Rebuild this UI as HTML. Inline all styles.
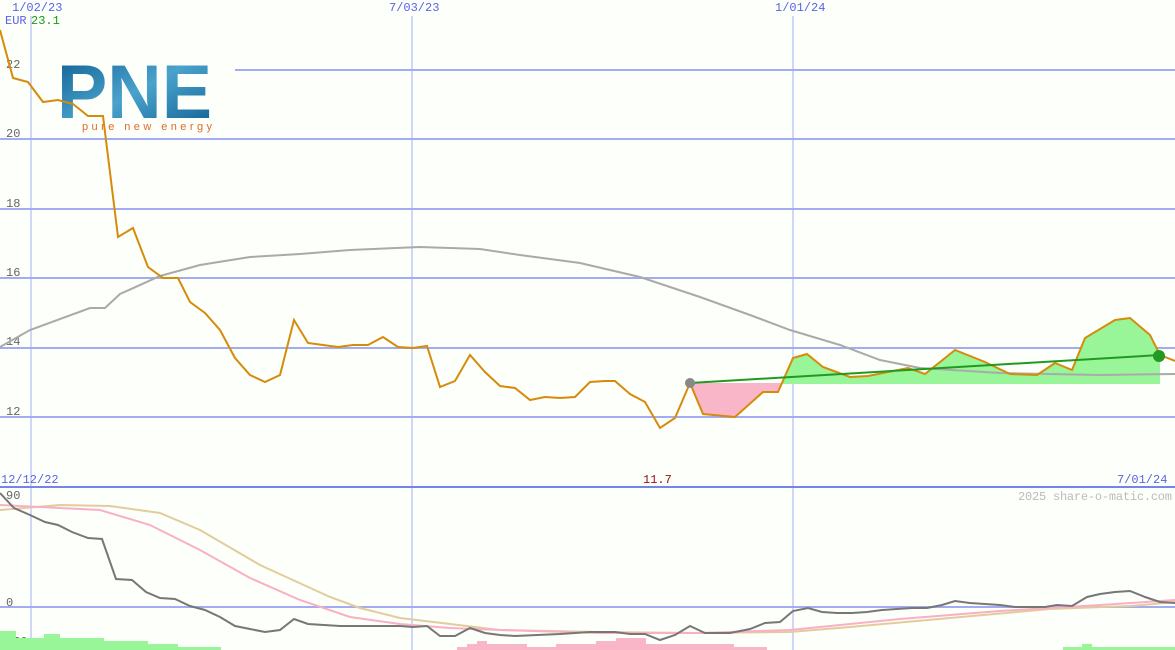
<!DOCTYPE html>
<html><head><meta charset="utf-8"><style>
body{margin:0;background:#fcfffa;}
svg{display:block;font-family:"Liberation Mono",monospace;}
</style></head><body>
<svg width="1175" height="650" viewBox="0 0 1175 650" xmlns="http://www.w3.org/2000/svg">
<rect width="1175" height="650" fill="#fcfffa"/>
<g stroke="#a3acf0" stroke-width="2">
<line x1="235" y1="70" x2="1175" y2="70"/>
<line x1="0" y1="139" x2="1175" y2="139"/>
<line x1="0" y1="209" x2="1175" y2="209"/>
<line x1="0" y1="278" x2="1175" y2="278"/>
<line x1="0" y1="348" x2="1175" y2="348"/>
<line x1="0" y1="417" x2="1175" y2="417"/>
<line x1="0" y1="607" x2="1175" y2="607"/>
</g>
<g stroke="#a3acf0" stroke-width="1">
<line x1="31" y1="16" x2="31" y2="650"/>
<line x1="412" y1="16" x2="412" y2="650"/>
<line x1="793" y1="16" x2="793" y2="650"/>
</g>
<line x1="0" y1="487" x2="1175" y2="487" stroke="#7585e6" stroke-width="2"/>
<g font-size="12" fill="#5b63e8">
<text x="12" y="11">1/02/23</text>
<text x="389" y="11">7/03/23</text>
<text x="775" y="11">1/01/24</text>
<text x="5" y="24">EUR</text>
<text x="1" y="483">12/12/22</text>
<text x="1117" y="483">7/01/24</text>
</g>
<text x="31" y="24" font-size="12" fill="#1a9a1a">23.1</text>
<text x="643" y="483" font-size="12" fill="#991111">11.7</text>
<text x="1018" y="500" font-size="12" fill="#bbbbbb" textLength="154">2025 share-o-matic.com</text>
<g font-size="12" fill="#666">
<text x="6" y="68">22</text><text x="6" y="137">20</text><text x="6" y="207">18</text>
<text x="6" y="276">16</text><text x="6" y="345">14</text><text x="6" y="415">12</text>
<text x="6" y="499">90</text><text x="6" y="606">0</text><text x="6" y="645">-30</text>
</g>
<defs><linearGradient id="lg" x1="0" y1="0" x2="1" y2="1">
<stop offset="0" stop-color="#0b5a8e"/><stop offset="0.5" stop-color="#4aa3cc"/><stop offset="1" stop-color="#0b5a8e"/></linearGradient></defs>
<text x="57" y="118" font-family="Liberation Sans,sans-serif" font-weight="bold" font-size="76" fill="url(#lg)" textLength="155" lengthAdjust="spacingAndGlyphs">PNE</text>
<text x="82" y="130" font-family="Liberation Sans,sans-serif" font-size="11" fill="#e06a2a" textLength="130">pure new energy</text>
<polygon points="690,383 703,414 735,417 763,392 778,392 782,383" fill="#f9b6c9"/>
<polygon points="782,384 793,358 807,354 823,367 850,377 868,376 908,368 925,374 955,350 985,362 1010,374 1037,375 1055,363 1072,370 1085,338 1115,320 1130,318 1150,335 1160,355 1160,384" fill="#98f598"/>
<polyline fill="none" stroke="#aaa" stroke-width="2" points="0,347 30,330 90,308 105,308 120,294 160,276 200,265 250,257 300,254 350,250 420,247 480,249 520,255 580,263 640,277 700,297 750,315 790,330 840,345 880,360 920,368 1000,373 1100,375 1175,374"/>
<polyline fill="none" stroke="#d68b0a" stroke-width="2" points="0,30 13,78 28,82 43,102 58,100 73,104 88,116 103,116 118,237 133,228 148,267 163,278 178,278 190,302 205,313 220,330 235,358 250,375 265,382 280,375 294,320 308,343 323,345 338,347 353,345 368,345 383,337 398,347 413,348 427,346 440,387 455,381 470,355 485,372 500,386 515,388 530,400 545,397 560,398 575,397 590,382 605,381 615,381 630,394 645,402 660,428 675,418 690,383 703,414 735,417 763,392 778,392 793,358 807,354 823,367 850,377 868,376 908,368 925,374 955,350 985,362 1010,374 1037,375 1055,363 1072,370 1085,338 1115,320 1130,318 1150,335 1160,355 1175,361"/>
<line x1="690" y1="383" x2="1160" y2="355" stroke="#229922" stroke-width="2"/>
<circle cx="690" cy="383" r="5" fill="#888"/>
<circle cx="1159" cy="356" r="6" fill="#229922"/>
<g fill="#98f598">
<rect x="0" y="631" width="16" height="19"/><rect x="16" y="638" width="28" height="12"/><rect x="44" y="634" width="16" height="16"/><rect x="60" y="638" width="44" height="12"/><rect x="104" y="641" width="44" height="9"/><rect x="148" y="644" width="30" height="6"/><rect x="178" y="647" width="43" height="3"/>
<rect x="1063" y="647" width="112" height="3"/><rect x="1082" y="644" width="10" height="6"/>
</g>
<g fill="#f9b6c9">
<rect x="457" y="647" width="310" height="3"/><rect x="467" y="644" width="60" height="6"/><rect x="477" y="641" width="10" height="9"/>
<rect x="556" y="644" width="130" height="6"/><rect x="596" y="641" width="50" height="9"/><rect x="616" y="638" width="30" height="12"/>
<rect x="674" y="644" width="60" height="6"/><rect x="734" y="647" width="30" height="3"/>
</g>
<polyline fill="none" stroke="#e3cc9c" stroke-width="2" points="0,510 60,505 110,506 160,513 200,530 260,565 330,597 360,608 400,618 450,624 500,630 600,632 700,633 790,632 850,627 950,618 1050,609 1130,606 1175,602"/>
<polyline fill="none" stroke="#f9b0c6" stroke-width="2" points="0,505 100,510 150,525 200,550 250,578 300,600 350,617 400,624 450,628 500,630 600,633 700,633 790,630 900,619 1000,611 1100,605 1175,600"/>
<polyline fill="none" stroke="#777" stroke-width="2" points="0,493 14,508 30,515 45,522 58,525 72,532 88,538 102,539 116,579 132,580 146,592 160,598 175,599 190,606 205,610 220,617 235,626 250,629 265,632 280,630 294,619 308,624 340,626 400,626 413,627 427,626 440,636 455,636 470,628 485,633 500,635 515,636 560,634 575,633 590,632 615,632 630,634 645,634 660,640 675,635 690,626 705,633 730,633 750,629 765,623 780,622 793,611 808,608 822,612 837,613 852,613 867,612 882,610 897,609 912,608 927,608 942,605 955,601 970,603 985,604 1000,605 1015,607 1030,607 1045,607 1057,605 1072,606 1087,597 1100,594 1115,592 1130,591 1145,597 1160,602 1175,603"/>
</svg>
</body></html>
